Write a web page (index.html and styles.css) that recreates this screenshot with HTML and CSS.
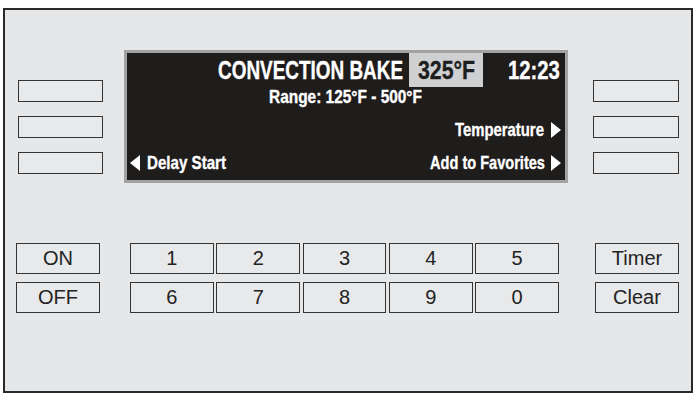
FILE: index.html
```html
<!DOCTYPE html>
<html>
<head>
<meta charset="utf-8">
<link rel="stylesheet" href="styles.css">
</head>
<body>
<div class="frame">
  <div class="top">
    <div class="side side-left">
      <div class="sbtn"></div>
      <div class="sbtn"></div>
      <div class="sbtn"></div>
    </div>
    <div class="screen">
      <div class="row-title">
        <span class="cw w-title"><span class="sx s-title">CONVECTION BAKE</span></span>
        <span class="temp"><span class="cw w-temp"><span class="sx s-temp">325°F</span></span></span>
        <span class="cw w-time"><span class="sx s-time">12:23</span></span>
      </div>
      <div class="row-range">
        <span class="cw w-range"><span class="sx s-range">Range: 125°F - 500°F</span></span>
      </div>
      <div class="row-opt row-right">
        <span class="cw w-tempopt"><span class="sx s-tempopt">Temperature</span></span>
        <svg class="tri" width="10" height="16" viewBox="0 0 10 16"><polygon points="0,0 10,8 0,16" fill="#fff"/></svg>
      </div>
      <div class="row-opt row-split">
        <span class="opt-left">
          <svg class="tri" width="10" height="16" viewBox="0 0 10 16"><polygon points="10,0 0,8 10,16" fill="#fff"/></svg>
          <span class="cw w-delay"><span class="sx s-delay">Delay Start</span></span>
        </span>
        <span class="opt-right">
          <span class="cw w-fav"><span class="sx s-fav">Add to Favorites</span></span>
          <svg class="tri" width="10" height="16" viewBox="0 0 10 16"><polygon points="0,0 10,8 0,16" fill="#fff"/></svg>
        </span>
      </div>
    </div>
    <div class="side side-right">
      <div class="sbtn"></div>
      <div class="sbtn"></div>
      <div class="sbtn"></div>
    </div>
  </div>
  <div class="bottom">
    <div class="col col-left">
      <div class="key">ON</div>
      <div class="key">OFF</div>
    </div>
    <div class="pad">
      <div class="key">1</div>
      <div class="key">2</div>
      <div class="key">3</div>
      <div class="key">4</div>
      <div class="key">5</div>
      <div class="key">6</div>
      <div class="key">7</div>
      <div class="key">8</div>
      <div class="key">9</div>
      <div class="key">0</div>
    </div>
    <div class="col col-right">
      <div class="key">Timer</div>
      <div class="key">Clear</div>
    </div>
  </div>
</div>
</body>
</html>
```
FILE: styles.css
```css
* { box-sizing: border-box; }
html, body { margin: 0; padding: 0; background: #ffffff; }
body { width: 696px; height: 396px; overflow: hidden; }

.frame {
  margin: 8px 0 0 3px;
  width: 690px;
  height: 385px;
  border: 2px solid #2a2a2a;
  background: #e6e7e8;
  padding-top: 40px;
  display: flex;
  flex-direction: column;
}

.top { display: flex; align-items: flex-start; }

.side {
  display: flex;
  flex-direction: column;
  gap: 14px;
  margin-top: 30px;
}
.side-left { margin-left: 13px; width: 85px; }
.side-right { margin-left: 25px; width: 86px; }

.sbtn {
  height: 22px;
  border: 1.5px solid #333;
  background: #e8e9ea;
}

.screen {
  margin-left: 21px;
  width: 444px;
  height: 133px;
  border: 3px solid #a2a2a2;
  background: #1f1c1c;
  color: #ffffff;
  font-family: "Liberation Sans", Arial, sans-serif;
  font-weight: 700;
  display: flex;
  flex-direction: column;
  padding: 0 4px 0 3px;
}

/* condensed text: fixed-width box, glyphs squeezed horizontally */
.cw { display: block; flex: none; white-space: nowrap; }
.sx {
  display: inline-block;
  white-space: nowrap;
  transform-origin: 0 50%;
  -webkit-text-stroke: 0.35px currentColor;
}

.row-title {
  height: 34px;
  display: flex;
  justify-content: flex-end;
  align-items: center;
  font-size: 26px;
  padding-right: 1px;
}
.w-title { width: 185px; margin-right: 6px; }
.s-title { transform: scaleX(0.728); }

.temp {
  align-self: stretch;
  display: flex;
  align-items: center;
  justify-content: center;
  width: 74px;
  background: #cfd0d1;
  color: #1e1e1e;
}
.w-temp { width: 57px; }
.s-temp { transform: scaleX(0.82); }

.w-time { width: 52px; margin-left: 25px; }
.s-time { transform: scaleX(0.78); }

.row-range {
  height: 20px;
  line-height: 20px;
  font-size: 18.5px;
  display: flex;
  justify-content: center;
}
.w-range { width: 153px; }
.s-range { transform: scaleX(0.834); }

.row-opt {
  margin-top: 13px;
  height: 20px;
  line-height: 20px;
  font-size: 19px;
  display: flex;
  align-items: center;
}
.row-right { justify-content: flex-end; gap: 6px; }
.row-split { justify-content: space-between; }
.opt-left, .opt-right { display: flex; align-items: center; }
.opt-left { gap: 7px; }
.opt-right { gap: 6px; }
.w-tempopt { width: 90px; }
.s-tempopt { transform: scaleX(0.782); }
.w-delay { width: 79px; }
.s-delay { transform: scaleX(0.796); }
.w-fav { width: 115px; }
.s-fav { transform: scaleX(0.767); }
.tri { display: block; }

.bottom {
  margin-top: 60px;
  display: flex;
  align-items: flex-start;
}
.col {
  display: flex;
  flex-direction: column;
  gap: 8px;
  width: 84px;
}
.col-left { margin-left: 11px; }
.col-right { margin-left: 36px; }

.pad {
  margin-left: 30px;
  width: 429px;
  display: grid;
  grid-template-columns: repeat(5, 1fr);
  column-gap: 2.5px;
  row-gap: 8px;
}

.key {
  height: 31px;
  border: 1.5px solid #333;
  background: #e8e9ea;
  display: flex;
  align-items: center;
  justify-content: center;
  font-family: "Liberation Sans", Arial, sans-serif;
  font-size: 20px;
  color: #222;
}
```
